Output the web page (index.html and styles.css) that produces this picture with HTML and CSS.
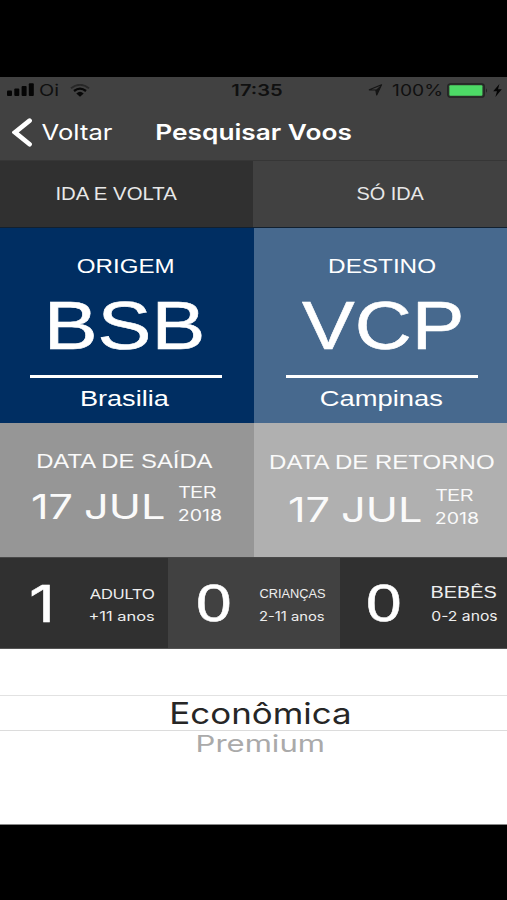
FILE: index.html
```html
<!DOCTYPE html>
<html lang="pt-BR">
<head>
<meta charset="utf-8">
<title>Pesquisar Voos</title>
<link rel="stylesheet" href="styles.css">
</head>
<body>
<main class="phone">
  <header class="header">
    <div class="status">
      <svg class="signal" width="27" height="14" viewBox="0 0 27 14"><rect x="0" y="7.5" width="5" height="5.5" rx="1"/><rect x="7.3" y="5.5" width="5" height="7.5" rx="1"/><rect x="14.6" y="3" width="5" height="10" rx="1"/><rect x="21.8" y="0.3" width="5" height="12.7" rx="1"/></svg>
      <span class="label carrier"><span>Oi</span></span>
      <svg class="wifi" width="20" height="13" viewBox="0 0 20 13"><path d="M1 4.3Q10-2.8 19 4.3" fill="none" stroke="#272727" stroke-width="1.8"/><path d="M4 7Q10 2.3 16 7" fill="none" stroke="#080808" stroke-width="2.3"/><path d="M6.3 9.4Q10 6.2 13.7 9.4L10 12.8Z" fill="#080808"/></svg>
      <span class="label clock"><span>17:35</span></span>
      <svg class="location" width="15" height="12" viewBox="0 0 15 12"><path d="M1.3 5.8 13.5.8 8.7 11 7.8 6Z" fill="none" stroke="#151515" stroke-width="1.2" stroke-linejoin="round"/><path d="M7.8 6 13.5.8 8.7 11Z" fill="#151515"/></svg>
      <span class="label charge"><span>100%</span></span>
      <svg class="battery" width="41" height="15" viewBox="0 0 41 15"><rect x=".8" y=".8" width="36.4" height="13.4" rx="2.5" fill="#303a31" stroke="#222" stroke-width="1.3"/><rect x="2.4" y="2.2" width="33" height="10.6" rx="1" fill="#4dda66"/><path d="M39 5.2q2 2.3 0 4.6Z" fill="#202020"/></svg>
      <svg class="bolt" width="9" height="13" viewBox="0 0 9 13"><path d="M6.4 0 .2 7.2H4L2.4 13 8.8 5.2H5Z" fill="#050505"/></svg>
    </div>
    <nav class="navbar">
      <svg class="back" width="20" height="29" viewBox="0 0 20 29"><path d="M17.6 2.6 3 14.4 17.6 26.2" fill="none" stroke="#fff" stroke-width="4.6" stroke-linecap="round" stroke-linejoin="miter"/></svg>
      <span class="label back-text"><span>Voltar</span></span>
      <h1 class="label title"><span>Pesquisar Voos</span></h1>
    </nav>
  </header>

  <section class="tabs">
    <div class="tab active"><span class="label round-trip"><span>IDA E VOLTA</span></span></div>
    <div class="tab"><span class="label one-way"><span>SÓ IDA</span></span></div>
  </section>

  <section class="cities">
    <div class="city origin">
      <span class="label heading"><span>ORIGEM</span></span>
      <span class="label code"><span>BSB</span></span>
      <hr>
      <span class="label name"><span>Brasilia</span></span>
    </div>
    <div class="city destination">
      <span class="label heading"><span>DESTINO</span></span>
      <span class="label code"><span>VCP</span></span>
      <hr>
      <span class="label name"><span>Campinas</span></span>
    </div>
  </section>

  <section class="dates">
    <div class="date departure">
      <span class="label date-title"><span>DATA DE SAÍDA</span></span>
      <div class="date-row">
        <span class="label day"><span>17 JUL</span></span>
        <div class="detail"><span class="label weekday"><span>TER</span></span><span class="label year"><span>2018</span></span></div>
      </div>
    </div>
    <div class="date return">
      <span class="label date-title"><span>DATA DE RETORNO</span></span>
      <div class="date-row">
        <span class="label day"><span>17 JUL</span></span>
        <div class="detail"><span class="label weekday"><span>TER</span></span><span class="label year"><span>2018</span></span></div>
      </div>
    </div>
  </section>

  <section class="passengers">
    <div class="pax adults">
      <span class="label count"><span>1</span></span>
      <div class="info"><span class="label kind"><span>ADULTO</span></span><span class="label age"><span>+11 anos</span></span></div>
    </div>
    <div class="pax children">
      <span class="label count"><span>0</span></span>
      <div class="info"><span class="label kind"><span>CRIANÇAS</span></span><span class="label age"><span>2-11 anos</span></span></div>
    </div>
    <div class="pax babies">
      <span class="label count"><span>0</span></span>
      <div class="info"><span class="label kind"><span>BEBÊS</span></span><span class="label age"><span>0-2 anos</span></span></div>
    </div>
  </section>

  <section class="picker">
    <div class="selected"><span class="label economy"><span>Econômica</span></span></div>
    <div class="next"><span class="label premium"><span>Premium</span></span></div>
  </section>
</main>
<script src="labels.js"></script>
</body>
</html>
```
FILE: labels.js
```js
// Stretches the text of each label horizontally so its ink fills the label's box.
// The ink is measured at a large size, where rounding to whole pixels is negligible.
const MEASURE_SIZE = 1000;
const ctx = document.createElement('canvas').getContext('2d');
document.querySelectorAll('.label').forEach((label) => {
  const text = label.firstElementChild;
  const style = getComputedStyle(text);
  const size = parseFloat(style.fontSize);
  const ratio = size / MEASURE_SIZE;
  ctx.font = `${style.fontWeight} ${MEASURE_SIZE}px ${style.fontFamily}`;
  ctx.fontKerning = style.fontKerning;
  ctx.wordSpacing = `${(parseFloat(style.wordSpacing) || 0) / ratio}px`;
  const m = ctx.measureText(text.textContent);
  const left = m.actualBoundingBoxLeft * ratio;
  const ink = m.actualBoundingBoxRight * ratio + left;
  const scale = label.getBoundingClientRect().width / ink;
  text.style.transform = `translateX(${left * scale}px) scaleX(${scale})`;
});
```
FILE: styles.css
```css
* { box-sizing: border-box; }

body {
  margin: 0;
  background: #000;
  font-family: "Liberation Sans", Arial, sans-serif;
  color: #fff;
}

.phone {
  width: 507px;
  height: 900px;
  padding-top: 77px;
  overflow: hidden;
}

/* A label's box is as tall as its capitals, and its text is stretched to its width. */
.label {
  display: block;
  flex: none;
  margin: 0;
  line-height: 0.69;
  white-space: nowrap;
}

.label > span {
  display: block;
  width: max-content;
  transform-origin: 0 50%;
}

.header .label, .picker .label, .day, .year, .age, .adults .count {
  font-family: Inter, sans-serif;
  line-height: 0.727;
}

.header {
  height: 84px;
  background: #414141;
  border-bottom: 1px solid #363636;
}

.status {
  display: flex;
  align-items: flex-start;
  height: 40px;
  padding: 7px 0 0 7px;
  color: #101010;
}

.signal { fill: #050505; margin-top: -1px; }
.carrier { width: 18px; margin: 1px 0 0 6px; font-size: 15.5px; }
.wifi { margin: 0 0 0 12px; }
.clock { width: 50px; margin: 1px 0 0 142px; font-size: 15.5px; font-weight: 600; }
.location { margin: 0 0 0 86px; }
.charge { width: 48px; margin: 1px 0 0 10px; font-size: 15.5px; }
.battery { margin: -1px 0 0 6px; }
.bolt { margin: 0 0 0 5px; }

.navbar {
  display: flex;
  align-items: flex-start;
  padding-left: 12px;
}

.back { margin-top: 1px; }
.back-text { width: 70px; margin: 8px 0 0 10px; font-size: 21.6px; }
.title { width: 194px; margin: 8px 0 0 45px; font-size: 21.6px; font-weight: 600; }

.tabs {
  display: grid;
  grid-template-columns: 253px 254px;
  height: 67px;
  border-bottom: 1px solid #12202f;
  color: #e8e8e8;
}

.tab { padding-top: 27px; background: #414141; }
.tab.active { background: #303030; }
.tab .label { font-size: 18px; }
.round-trip { width: 121px; margin-left: 57px; }
.one-way { width: 67px; margin-left: 104px; }

.cities {
  display: grid;
  grid-template-columns: 254px 253px;
  height: 195px;
}

.city {
  display: flex;
  flex-direction: column;
  align-items: flex-start;
  padding-top: 31px;
}

.origin { background: #002e62; }
.destination { background: #47698e; }
.city .heading { font-size: 20.5px; }
.city .code { margin-top: 29px; font-size: 68.5px; -webkit-text-stroke: 0.6px #fff; }
.city hr { width: 192px; height: 3px; margin: 26px 0 0 30px; border: 0; background: #fff; }
.city .name { margin-top: 13px; font-size: 22px; }
.origin .heading { width: 95px; margin-left: 78px; }
.origin .code { width: 152px; margin-left: 50px; }
.origin .name { width: 87px; margin-left: 82px; }
.destination .heading { width: 105px; margin-left: 76px; }
.destination .code { width: 159px; margin-left: 48px; }
.destination hr { margin-left: 32px; }
.destination .name { width: 121px; margin-left: 67px; }

.dates {
  display: grid;
  grid-template-columns: 254px 253px;
  height: 134px;
}

.date { padding-top: 31px; color: #fafafa; }
.departure { background: #969696; }
.return { padding-top: 32px; background: #b0b0b0; }
.date-title { font-size: 20.7px; }
.departure .date-title { width: 176px; margin-left: 38px; }
.return .date-title { width: 224px; margin-left: 17px; }
.date-row { display: flex; margin: 18px 0 0 33px; }
.return .date-row { margin: 20px 0 0 36px; }
.day { width: 131px; margin-top: 9px; font-size: 33.7px; font-kerning: none; word-spacing: -1px; }
.detail { margin-left: 15px; }
.weekday { width: 37px; margin-top: 1px; font-size: 17px; }
.year { width: 42px; margin-top: 11px; font-size: 15.2px; }

.passengers {
  display: grid;
  grid-template-columns: 168px 172px 167px;
  height: 92px;
  border-top: 1px solid #484848;
  border-bottom: 1px solid #555;
}

.pax { display: flex; align-items: flex-start; padding-top: 28px; background: #303030; }
.pax.children { background: #414141; }
.count { width: 32px; margin-left: 30px; font-size: 52px; -webkit-text-stroke: 0.5px #fff; }
.adults .count { width: 18px; margin-left: 32px; font-size: 50px; }
.babies .count { margin-left: 28px; }
.info { display: flex; flex-direction: column; justify-content: space-between; height: 35px; color: #eee; }
.info .label { width: 64px; }
.adults .info { margin-left: 40px; padding-top: 3px; }
.children .info { margin-left: 30px; padding-top: 4px; }
.babies .info { height: 36px; margin-left: 32px; padding-top: 1px; }
.adults .kind { font-size: 15px; }
.children .kind { width: 65px; font-size: 12px; }
.babies .kind { font-size: 16.7px; }
.age { font-size: 12.5px; }
.babies .age { width: 65px; font-size: 13.6px; }

.picker {
  height: 176px;
  padding-top: 46px;
  background: #fff;
  border-bottom: 1px solid #888;
}

.selected {
  height: 36px;
  padding: 7px 0 0 172px;
  border-top: 1px solid #e2e2e2;
  border-bottom: 1px solid #dcdcdc;
}

.economy { width: 177px; font-size: 29.5px; color: #262626; }
.next { padding: 5px 0 0 198px; }
.premium { width: 125px; font-size: 22.6px; color: #aaa; }
```
